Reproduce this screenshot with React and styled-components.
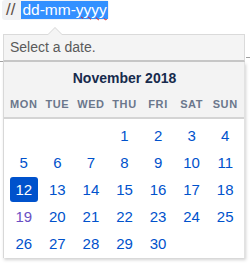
import React from "react";
import styled, { createGlobalStyle } from "styled-components";

const Global = createGlobalStyle`
  html, body { margin: 0; padding: 0; background: #fff; }
  body { font-family: "Liberation Sans", Arial, sans-serif; }
`;

const Page = styled.div`
  width: 250px;
  height: 264px;
  position: relative;
  overflow: hidden;
`;

const Field = styled.div`
  display: flex;
  align-items: center;
  width: fit-content;
  height: 20px;
  margin-left: 2px;
  padding: 0 1px 0 4px;
  background: #f1f2f4;
  border-radius: 3px;
  font-size: 15.5px;
  line-height: 18px;
`;

const Slashes = styled.span`
  color: #5e4f47;
  font-size: 17px;
  margin-right: 6px;
`;

const Selected = styled.span`
  background: #3390ff;
  color: #fff;
  padding: 0 1px;
`;

const Misspelt = styled.span`
  text-decoration: underline wavy #e02020;
  text-decoration-thickness: 1px;
  text-underline-offset: 1px;
`;

const Tip = styled.div`
  position: relative;
  margin: 14px 5px 0 3px;
  height: 25px;
  background: #f4f4f4;
  border: 1px solid #dadada;
  border-bottom: 2px solid #c6c6c6;
  color: #5a5a5a;
  font-size: 14px;
  line-height: 25px;
  padding-left: 6px;
  &::before, &::after {
    content: "";
    position: absolute;
    left: 44px;
    border: 7px solid transparent;
  }
  &::before { top: -15px; border-bottom-color: #d6d6d6; }
  &::after { top: -14px; border-bottom-color: #f4f4f4; }
`;

const Calendar = styled.div`
  margin: 0 5px 0 3px;
  border-left: 1px solid #d8d8d8;
  border-right: 1px solid #e2e2e2;
  box-shadow: 1px 2px 3px rgba(0,0,0,0.18);
  background: #fff;
`;

const Head = styled.div`
  background: #f3f3f3;
  border-bottom: 2px solid #d4d4d4;
  padding: 5px 2px 5px 3px;
`;

const Month = styled.div`
  text-align: center;
  font-weight: 700;
  font-size: 14px;
  color: #172b4d;
  height: 22px;
  line-height: 22px;
  margin-bottom: 7px;
`;

const Grid = styled.div`
  display: grid;
  grid-template-columns: repeat(7, 1fr);
  align-items: center;
  justify-items: center;
`;

const Weekday = styled.div`
  font-size: 11px;
  font-weight: 700;
  letter-spacing: 0.6px;
  color: #6b778c;
  line-height: 16px;
`;

const Days = styled(Grid)`
  padding: 4px 2px 2px 3px;
  row-gap: 2px;
`;

const Day = styled.div`
  width: 28px;
  height: 25px;
  line-height: 25px;
  text-align: center;
  font-size: 15px;
  border-radius: 3px;
  color: ${p => (p.$sel ? "#fff" : p.$alt ? "#6a4fc4" : "#0052cc")};
  background: ${p => (p.$sel ? "#0052cc" : "transparent")};
`;

const EdgeMark = styled.div`
  position: absolute;
  ${p => (p.$left ? "left: 0;" : "right: 0;")}
  top: ${p => p.$top}px;
  width: ${p => p.$w}px;
  height: 1px;
  background: #a0a0a0;
`;

const weekdays = ["MON", "TUE", "WED", "THU", "FRI", "SAT", "SUN"];
const cells = [null, null, null, ...Array.from({ length: 30 }, (_, i) => i + 1)];

export default function App() {
  return (
    <Page>
      <Global />
      <Field>
        <Slashes>//</Slashes>
        <Selected>dd-mm-<Misspelt>yyyy</Misspelt></Selected>
      </Field>
      <Tip>Select a date.</Tip>
      <Calendar>
        <Head>
          <Month>November 2018</Month>
          <Grid>
            {weekdays.map(w => <Weekday key={w}>{w}</Weekday>)}
          </Grid>
        </Head>
        <Days>
          {cells.map((d, i) => (
            <Day key={i} $sel={d === 12} $alt={d === 19}>{d || ""}</Day>
          ))}
        </Days>
      </Calendar>
      <EdgeMark $top={57} $w={4} />
      <EdgeMark $left $top={61} $w={3} />
    </Page>
  );
}
